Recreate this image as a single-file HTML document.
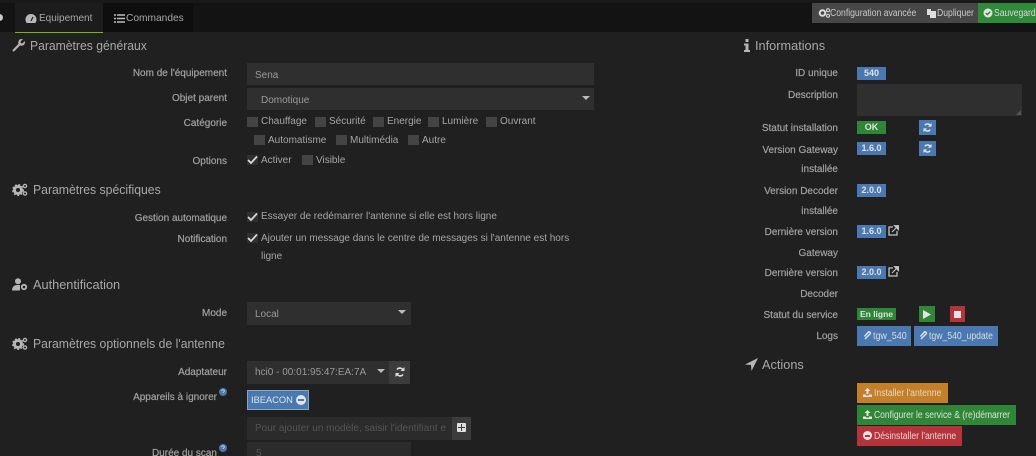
<!DOCTYPE html>
<html lang="fr"><head><meta charset="utf-8"><title>Equipement</title>
<style>
html,body{margin:0;padding:0;background:#202020}
#p{position:relative;width:1036px;height:456px;overflow:hidden;background:#202020;font-family:"Liberation Sans",sans-serif;font-size:10px;color:#a6a6a6;filter:blur(.3px)}
#p div,#p svg{position:absolute}
.t{white-space:nowrap;line-height:14px;height:14px}
.l{white-space:nowrap;line-height:14px;height:14px;margin-top:2px;text-align:right;color:#a0a0a0;font-size:10px;-webkit-text-stroke:.2px #a0a0a0}
.h{white-space:nowrap;font-size:13px;line-height:16px;height:16px;color:#a8a8a8;transform:scaleX(.94);transform-origin:0 50%}
.i{background:#2f2f2f;color:#9a9a9a;line-height:25px;height:22px}
.c{width:11px;height:10px;background:#444}
.k{background:#303030}
.b{color:#e0e0e0;text-align:center;font-weight:bold;white-space:nowrap}
.n{transform:scaleX(.89);transform-origin:0 50%}
.blue{background:#4a78b0}.green{background:#2f8637}.red{background:#b5343c}
</style></head><body><div id="p">
<div style="left:0;top:0;width:1036px;height:32px;background:#131313"></div>
<div style="left:0;top:0;width:1036px;height:3px;background:#191919"></div>
<div style="left:-4px;top:14px;width:7px;height:7px;border-radius:50%;background:#c8c8c8"></div>
<div style="left:15px;top:3px;width:88px;height:30px;background:#1c1c1c;border-bottom:1px solid #7ab800;box-sizing:border-box"></div>
<div style="left:103px;top:3px;width:90px;height:29px;background:#0e0e0e"></div>
<svg style="left:25px;top:13px" width="12" height="11" viewBox="0 0 12 11"><path d="M6 1a5.500 5.500 0 0 0-5.500 5.500c0 1.500.5 2.800 1.300 3.500h8.400c.8-.7 1.300-2 1.300-3.500A5.500 5.500 0 0 0 6 1z" fill="#b8b8b8"/><path d="M6 8L8 4" stroke="#1c1c1c" stroke-width="1.200"/></svg>
<div class="t" style="left:39px;top:12px;color:#a8a8a8">Equipement</div>
<svg style="left:114px;top:14px" width="11" height="9" viewBox="0 0 11 9"><path d="M0 1h2M3 1h8M0 4.500h2M3 4.500h8M0 8h2M3 8h8" stroke="#bdbdbd" stroke-width="1.500"/></svg>
<div class="t" style="left:126px;top:12px;color:#a8a8a8;font-size:10.2px">Commandes</div>

<div style="left:812px;top:3px;width:166px;height:20px;background:#474747"></div>
<div style="left:978px;top:3px;width:58px;height:20px;background:#2f8a3a"></div>
<svg style="left:818px;top:8px" width="12" height="10" viewBox="0 0 12 10"><circle cx="4.500" cy="5" r="2.800" fill="none" stroke="#ddd" stroke-width="2"/><circle cx="10" cy="2.300" r="1.500" fill="none" stroke="#ddd"/><circle cx="10" cy="7.700" r="1.500" fill="none" stroke="#ddd"/></svg>
<div class="t n" style="left:830px;top:7px;color:#c8c8c8;font-size:9.700px">Configuration avancée</div>
<svg style="left:927px;top:8px" width="9" height="10" viewBox="0 0 9 10"><path d="M0 1h4v6H0zM3 3h6v7H3z" fill="#ddd"/></svg>
<div class="t n" style="left:937px;top:7px;color:#c8c8c8;font-size:9.700px">Dupliquer</div>
<svg style="left:983px;top:8px" width="10" height="10" viewBox="0 0 10 10"><circle cx="5" cy="5" r="4.500" fill="#e2e2e2"/><path d="M2.800 5l1.600 1.600 2.900-3" stroke="#2f8a3a" stroke-width="1.400" fill="none"/></svg>
<div class="t n" style="left:994px;top:7px;color:#d8d8d8;font-size:9.700px">Sauvegarder</div>

<!-- left column -->
<svg style="left:12px;top:39px" width="13" height="13" viewBox="0 0 13 13"><path d="M1 12l1 0 6-6c1.500.7 3 .2 4-.8.600-.7.800-1.600.6-2.400L10.500 4.800 8.600 4.300 8.100 2.400 10.200.4C9.300.1 8.400.4 7.700 1c-1 1-1.400 2.500-.8 3.900L1 11z" fill="#b5b5b5" stroke="#b5b5b5" stroke-width=".7"/></svg>
<div class="h" style="left:30px;top:38px;transform:scaleX(.935)">Paramètres généraux</div>

<div class="l" style="right:809px;top:65px">Nom de l'équipement</div>
<div class="i" style="left:247px;top:63px;width:347px;text-indent:8px">Sena</div>
<div class="l" style="right:809px;top:90px">Objet parent</div>
<div class="i" style="left:247px;top:88px;width:347px;text-indent:14px">Domotique</div>
<svg style="left:582px;top:96px" width="8" height="5"><path d="M0 0h8L4 4z" fill="#bbb"/></svg>

<div class="l" style="right:809px;top:115px">Catégorie</div>
<div class="c" style="left:247px;top:117px"></div><div class="t" style="left:261px;top:115px">Chauffage</div>
<div class="c" style="left:315px;top:117px"></div><div class="t" style="left:329px;top:115px">Sécurité</div>
<div class="c" style="left:373px;top:117px"></div><div class="t" style="left:387px;top:115px">Energie</div>
<div class="c" style="left:428px;top:117px"></div><div class="t" style="left:442px;top:115px">Lumière</div>
<div class="c" style="left:486px;top:117px"></div><div class="t" style="left:500px;top:115px">Ouvrant</div>
<div class="c" style="left:254px;top:135px"></div><div class="t" style="left:268px;top:134px">Automatisme</div>
<div class="c" style="left:336px;top:135px"></div><div class="t" style="left:350px;top:134px">Multimédia</div>
<div class="c" style="left:408px;top:135px"></div><div class="t" style="left:422px;top:134px">Autre</div>

<div class="l" style="right:809px;top:153px">Options</div>
<div class="c k" style="left:247px;top:155px"></div>
<svg style="left:247px;top:155px" width="11" height="10"><path d="M1 5l3 3 6-6.500" stroke="#ddd" stroke-width="1.700" fill="none"/></svg>
<div class="t" style="left:261px;top:154px">Activer</div>
<div class="c" style="left:302px;top:155px"></div><div class="t" style="left:316px;top:154px">Visible</div>

<svg style="left:12px;top:183px" width="16" height="13" viewBox="0 0 16 13"><circle cx="6" cy="7" r="3.500" fill="none" stroke="#b5b5b5" stroke-width="3"/><circle cx="6" cy="7" r="5.300" fill="none" stroke="#b5b5b5" stroke-width="1.400" stroke-dasharray="1.800 1.800"/><circle cx="13" cy="3" r="1.600" fill="none" stroke="#b5b5b5" stroke-width="1.300"/><circle cx="13" cy="10.500" r="1.600" fill="none" stroke="#b5b5b5" stroke-width="1.300"/></svg>
<div class="h" style="left:33px;top:182px">Paramètres spécifiques</div>

<div class="l" style="right:809px;top:210px">Gestion automatique</div>
<div class="c k" style="left:247px;top:212px"></div>
<svg style="left:247px;top:212px" width="11" height="10"><path d="M1 5l3 3 6-6.500" stroke="#ddd" stroke-width="1.700" fill="none"/></svg>
<div class="t" style="left:261px;top:210px">Essayer de redémarrer l'antenne si elle est hors ligne</div>
<div class="l" style="right:809px;top:231px">Notification</div>
<div class="c k" style="left:247px;top:233px"></div>
<svg style="left:247px;top:233px" width="11" height="10"><path d="M1 5l3 3 6-6.500" stroke="#ddd" stroke-width="1.700" fill="none"/></svg>
<div class="t" style="left:261px;top:232px">Ajouter un message dans le centre de messages si l'antenne est hors</div>
<div class="t" style="left:261px;top:250px">ligne</div>

<svg style="left:12px;top:278px" width="16" height="13" viewBox="0 0 16 13"><circle cx="6" cy="3.300" r="3" fill="#b5b5b5"/><path d="M0 12.500c0-3.500 2-5.500 5-5.500h3v5.500z" fill="#b5b5b5"/><circle cx="12" cy="9" r="2.200" fill="none" stroke="#b5b5b5" stroke-width="1.800"/></svg>
<div class="h" style="left:33px;top:277px;transform:scaleX(.98)">Authentification</div>

<div class="l" style="right:809px;top:305px">Mode</div>
<div class="i" style="left:247px;top:302px;width:164px;text-indent:8px;height:23px">Local</div>
<svg style="left:398px;top:310px" width="8" height="5"><path d="M0 0h8L4 4z" fill="#bbb"/></svg>

<svg style="left:12px;top:337px" width="16" height="13" viewBox="0 0 16 13"><circle cx="6" cy="7" r="3.500" fill="none" stroke="#b5b5b5" stroke-width="3"/><circle cx="6" cy="7" r="5.300" fill="none" stroke="#b5b5b5" stroke-width="1.400" stroke-dasharray="1.800 1.800"/><circle cx="13" cy="3" r="1.600" fill="none" stroke="#b5b5b5" stroke-width="1.300"/><circle cx="13" cy="10.500" r="1.600" fill="none" stroke="#b5b5b5" stroke-width="1.300"/></svg>
<div class="h" style="left:33px;top:336px">Paramètres optionnels de l'antenne</div>

<div class="l" style="right:809px;top:364px">Adaptateur</div>
<div class="i" style="left:247px;top:361px;width:142px;text-indent:8px;line-height:24px;height:23px">hci0 - 00:01:95:47:EA:7A</div>
<svg style="left:377px;top:369px" width="8" height="5"><path d="M0 0h8L4 4z" fill="#bbb"/></svg>
<div style="left:389px;top:361px;width:21px;height:23px;background:#3c3c3c"></div>
<svg style="left:395px;top:367px" width="10" height="10" viewBox="0 0 10 10"><path d="M8.500 3.500A3.800 3.800 0 0 0 2 2.500M1.500 6.500A3.800 3.800 0 0 0 8 7.500" fill="none" stroke="#ddd" stroke-width="1.600"/><path d="M9.500 0v4h-4zM.5 10V6h4z" fill="#ddd"/></svg>

<div class="l" style="right:809px;top:389px;padding-right:10px">Appareils à ignorer</div>
<svg style="left:219px;top:388px" width="8" height="8"><circle cx="4" cy="4" r="4" fill="#4a78b0"/><path d="M2.700 3c0-1.600 2.700-1.600 2.700 0 0 1-1.400 1-1.400 2" stroke="#ddd" stroke-width=".8" fill="none"/></svg>
<div style="left:247px;top:390px;width:62px;height:20px;background:#4a78b0;border:1px solid #8aa4c4;box-sizing:border-box"></div>
<div class="t" style="left:251px;top:393px;color:#e2e2e2;font-size:9.300px">IBEACON</div>
<div style="left:296px;top:395px;width:10px;height:10px;border-radius:50%;background:#e4e4e4"></div>
<div style="left:298px;top:399px;width:6px;height:2px;background:#4a78b0"></div>

<div class="i" style="left:247px;top:417px;width:196px;padding-right:9px;height:23px;line-height:23px;text-indent:8px;color:#555;overflow:hidden;white-space:nowrap;background:#2b2b2b;font-size:10px">Pour ajouter un modèle, saisir l'identifiant e</div>
<div style="left:452px;top:417px;width:19px;height:23px;background:#3c3c3c"></div>
<div style="left:457px;top:423px;width:9px;height:9px;background:#e0e0e0;border-radius:1px"></div>
<div style="left:458px;top:427px;width:7px;height:1px;background:#3c3c3c"></div>
<div style="left:461px;top:424px;width:1px;height:7px;background:#3c3c3c"></div>

<div class="l" style="right:809px;top:445px;padding-right:10px">Durée du scan</div>
<svg style="left:219px;top:444px" width="8" height="8"><circle cx="4" cy="4" r="4" fill="#4a78b0"/><path d="M2.700 3c0-1.600 2.700-1.600 2.700 0 0 1-1.400 1-1.400 2" stroke="#ddd" stroke-width=".8" fill="none"/></svg>
<div class="i" style="left:247px;top:442px;width:164px;height:23px;text-indent:9px;color:#555;background:#2b2b2b;line-height:24px">5</div>

<!-- right column -->
<svg style="left:744px;top:39px" width="6" height="13" viewBox="0 0 6 13"><path d="M1.500 0h3v3h-3zM0 4.500h4.500V11H6v2H0v-2h1.500V6.500H0z" fill="#b5b5b5"/></svg>
<div class="h" style="left:755px;top:38px;transform:scaleX(.98)">Informations</div>

<div class="l" style="right:198px;top:65px">ID unique</div>
<div class="b blue" style="left:857px;top:67px;width:29px;height:13px;line-height:13px;font-size:9px">540</div>
<div class="l" style="right:198px;top:87px">Description</div>
<div style="left:857px;top:84px;width:165px;height:32px;background:#2f2f2f"></div>
<svg style="left:1016px;top:110px" width="5" height="5"><path d="M5 0v5H0z" fill="#555"/></svg>

<div class="l" style="right:198px;top:120px">Statut installation</div>
<div class="b green" style="left:857px;top:121px;width:29px;height:13px;line-height:13px;font-size:9px">OK</div>
<div class="blue" style="left:919px;top:120px;width:17px;height:15px"></div>
<svg style="left:923px;top:123px" width="9" height="9" viewBox="0 0 10 10"><path d="M8.500 3.500A3.800 3.800 0 0 0 2 2.500M1.500 6.500A3.800 3.800 0 0 0 8 7.500" fill="none" stroke="#e4e4e4" stroke-width="1.600"/><path d="M9.500 0v4h-4zM.5 10V6h4z" fill="#e4e4e4"/></svg>

<div class="l" style="right:198px;top:142px">Version Gateway</div>
<div class="b blue" style="left:857px;top:142px;width:29px;height:13px;line-height:13px;font-size:9px">1.6.0</div>
<div class="blue" style="left:919px;top:141px;width:17px;height:15px"></div>
<svg style="left:923px;top:144px" width="9" height="9" viewBox="0 0 10 10"><path d="M8.500 3.500A3.800 3.800 0 0 0 2 2.500M1.500 6.500A3.800 3.800 0 0 0 8 7.500" fill="none" stroke="#e4e4e4" stroke-width="1.600"/><path d="M9.500 0v4h-4zM.5 10V6h4z" fill="#e4e4e4"/></svg>
<div class="l" style="right:198px;top:161px">installée</div>

<div class="l" style="right:198px;top:183px">Version Decoder</div>
<div class="b blue" style="left:857px;top:184px;width:29px;height:13px;line-height:13px;font-size:9px">2.0.0</div>
<div class="l" style="right:198px;top:203px">installée</div>

<div class="l" style="right:198px;top:224px">Dernière version</div>
<div class="b blue" style="left:857px;top:225px;width:29px;height:13px;line-height:13px;font-size:9px">1.6.0</div>
<svg style="left:888px;top:225px" width="11" height="11" viewBox="0 0 11 11"><path d="M5 2H1v8h8V6" fill="none" stroke="#c4c4c4" stroke-width="1.300"/><path d="M4 7l5-5M6.500 .7h4v4z" stroke="#c4c4c4" fill="#c4c4c4" stroke-width="1.100"/></svg>
<div class="l" style="right:198px;top:245px">Gateway</div>

<div class="l" style="right:198px;top:265px">Dernière version</div>
<div class="b blue" style="left:857px;top:266px;width:29px;height:13px;line-height:13px;font-size:9px">2.0.0</div>
<svg style="left:888px;top:266px" width="11" height="11" viewBox="0 0 11 11"><path d="M5 2H1v8h8V6" fill="none" stroke="#c4c4c4" stroke-width="1.300"/><path d="M4 7l5-5M6.500 .7h4v4z" stroke="#c4c4c4" fill="#c4c4c4" stroke-width="1.100"/></svg>
<div class="l" style="right:198px;top:286px">Decoder</div>

<div class="l" style="right:198px;top:307px">Statut du service</div>
<div class="b green" style="left:857px;top:308px;width:39px;height:12px;line-height:12px;font-size:8.500px">En ligne</div>
<div class="green" style="left:919px;top:306px;width:16px;height:16px"></div>
<svg style="left:923px;top:310px" width="9" height="9"><path d="M0 0l8 4.500L0 9z" fill="#e4e4e4"/></svg>
<div class="red" style="left:950px;top:306px;width:15px;height:16px"></div>
<div style="left:954px;top:311px;width:7px;height:7px;background:#e4e4e4"></div>

<div class="l" style="right:198px;top:328px">Logs</div>
<div class="blue" style="left:857px;top:326px;width:54px;height:20px"></div>
<div class="t n" style="left:873px;top:330px;color:#ddd;font-size:10px">tgw_540</div>
<div class="blue" style="left:914px;top:326px;width:84px;height:20px"></div>
<div class="t" style="left:929px;top:330px;color:#ddd;font-size:10px;transform:scaleX(.865);transform-origin:0 50%">tgw_540_update</div>
<svg style="left:863px;top:331px" width="9" height="10" viewBox="0 0 9 10"><path d="M2 8L7 3a1.200 1.200 0 0 0-1.800-1.700L1.500 5.500" fill="none" stroke="#ddd" stroke-width="1.500"/></svg>
<svg style="left:919px;top:331px" width="9" height="10" viewBox="0 0 9 10"><path d="M2 8L7 3a1.200 1.200 0 0 0-1.800-1.700L1.500 5.500" fill="none" stroke="#ddd" stroke-width="1.500"/></svg>

<svg style="left:745px;top:358px" width="13" height="13" viewBox="0 0 13 13"><path d="M13 0L0 6.500l6 .5.500 6z" fill="#b5b5b5"/></svg>
<div class="h" style="left:762px;top:357px;transform:scaleX(.98)">Actions</div>

<div style="left:857px;top:383px;width:91px;height:20px;background:#c47f27"></div>
<div class="t n" style="left:874px;top:387px;color:#e0d8c8;font-size:9.700px">Installer l'antenne</div>
<svg style="left:863px;top:388px" width="9" height="9" viewBox="0 0 9 9"><path d="M4.500 0L7.500 3H5.500V6h-2V3H1.500zM0 6.500h3v1h3v-1h3V9H0z" fill="#e4e4e4"/></svg>
<div style="left:857px;top:405px;width:159px;height:20px;background:#2f8637"></div>
<div class="t n" style="left:874px;top:409px;color:#e0e0e0;font-size:9.700px;transform:scaleX(.877)">Configurer le service &amp; (re)démarrer</div>
<svg style="left:863px;top:410px" width="9" height="9" viewBox="0 0 9 9"><path d="M4.500 0L7.500 3H5.500V6h-2V3H1.500zM0 6.500h3v1h3v-1h3V9H0z" fill="#e4e4e4"/></svg>
<div style="left:857px;top:426px;width:105px;height:20px;background:#b5343c"></div>
<div class="t n" style="left:874px;top:430px;color:#e4d4d4;font-size:9.700px">Désinstaller l'antenne</div>
<div style="left:863px;top:431px;width:9px;height:9px;border-radius:50%;background:#e4e4e4"></div>
<div style="left:865px;top:435px;width:5px;height:1.500px;background:#b5343c"></div>
</div></body></html>
